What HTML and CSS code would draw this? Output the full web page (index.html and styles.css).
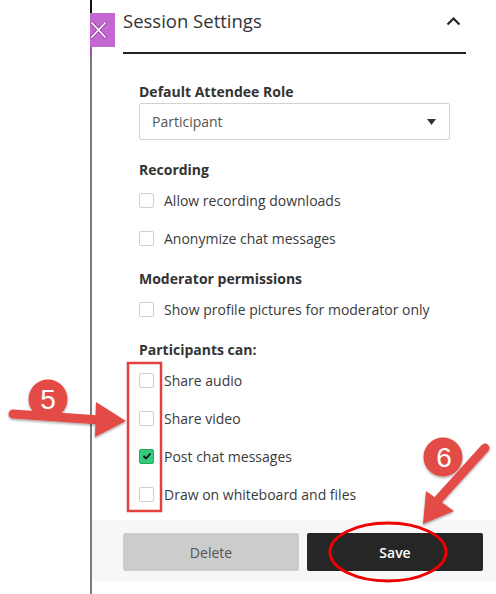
FILE: index.html
```html
<!DOCTYPE html>
<html>
<head>
    <title>Session Settings</title>
    <link rel="stylesheet" href="styles.css">
</head>
<body>
    <div class="page">
        <div class="gutter"></div>

        <div class="panel">
            <button class="close-btn" type="button" aria-label="Close">
                <svg width="25" height="34" viewBox="0 0 25 34">
                    <path d="M2 10 L15 24 M15 10 L2 24" stroke="#9b3fa8" stroke-width="3.4" stroke-linecap="round"/>
                    <path d="M2 10 L15 24 M15 10 L2 24" stroke="#fff" stroke-width="1.8" stroke-linecap="round"/>
                </svg>
            </button>

            <div class="panel-body">
                <div class="panel-header">
                    <h2>Session Settings</h2>
                    <svg class="chevron" width="15" height="10" viewBox="0 0 15 10">
                        <polyline points="1.5,8.5 7.5,2.5 13.5,8.5" fill="none" stroke="#222" stroke-width="2.2"/>
                    </svg>
                </div>

                <div class="settings">
                    <div class="section-title">Default Attendee Role</div>
                    <div class="select-box">
                        <span>Participant</span>
                        <svg width="9" height="6" viewBox="0 0 9 6"><polygon points="0,0 9,0 4.5,6" fill="#333"/></svg>
                    </div>

                    <div class="section-title section-gap">Recording</div>
                    <div class="check-row"><span class="check"></span>Allow recording downloads</div>
                    <div class="check-row"><span class="check"></span>Anonymize chat messages</div>

                    <div class="section-title section-gap-sm">Moderator permissions</div>
                    <div class="check-row"><span class="check"></span>Show profile pictures for moderator only</div>

                    <div class="section-title section-gap-sm">Participants can:</div>
                    <div class="check-row"><span class="check"></span>Share audio</div>
                    <div class="check-row"><span class="check"></span>Share video</div>
                    <div class="check-row">
                        <span class="check checked">
                            <svg width="10" height="8" viewBox="0 0 10 8"><polyline points="1.5,4 4,6.5 8.5,1.5" fill="none" stroke="#111" stroke-width="1.8"/></svg>
                        </span>Post chat messages
                    </div>
                    <div class="check-row"><span class="check"></span>Draw on whiteboard and files</div>
                </div>
            </div>

            <div class="panel-footer">
                <button type="button" class="btn btn-delete">Delete</button>
                <button type="button" class="btn btn-save">Save</button>
            </div>
        </div>
    </div>

    <svg class="annotations" width="496" height="594" viewBox="0 0 496 594">
        <defs>
            <filter id="shadow" x="-30%" y="-30%" width="160%" height="160%">
                <feDropShadow dx="0" dy="1.5" stdDeviation="1.2" flood-color="#000" flood-opacity="0.35"/>
            </filter>
        </defs>

        <rect x="128" y="363" width="33" height="148" fill="none" stroke="#e3403f" stroke-width="2.5"/>

        <g filter="url(#shadow)" fill="#e34b47">
            <line x1="13" y1="414" x2="100" y2="420" stroke="#e34b47" stroke-width="9" stroke-linecap="round"/>
            <polygon points="96,402 126,421 95,437"/>
            <circle cx="48" cy="399" r="19.5"/>
        </g>
        <text x="48" y="409" class="num">5</text>

        <g filter="url(#shadow)" fill="#e34b47">
            <line x1="485" y1="448" x2="438" y2="500" stroke="#e34b47" stroke-width="9" stroke-linecap="round"/>
            <polygon points="426,491 454,511 423,524"/>
            <circle cx="443" cy="457" r="19.5"/>
        </g>
        <text x="444" y="467" class="num">6</text>

        <ellipse cx="388" cy="552" rx="58" ry="29" fill="none" stroke="#f00000" stroke-width="3"/>
    </svg>
</body>
</html>
```

FILE: styles.css
```css
body {
    margin: 0;
    font-family: "Open Sans", "Liberation Sans", sans-serif;
    color: #333;
    background: #fff;
}

.page {
    display: flex;
    height: 594px;
    overflow: hidden;
}

.gutter {
    width: 90px;
    flex-shrink: 0;
}

.panel {
    position: relative;
    flex: 1;
    border-left: 2px solid #7a7a7a;
}

.panel::before {
    content: "";
    position: absolute;
    left: -2px;
    top: 0;
    width: 2px;
    height: 13px;
    background: #111;
}

.panel::after {
    content: "";
    position: absolute;
    left: -2px;
    top: 13px;
    width: 2px;
    height: 44px;
    background: #a052b0;
}

.close-btn {
    position: absolute;
    left: -2px;
    top: 13px;
    width: 25px;
    height: 34px;
    padding: 0;
    border: none;
    background: #c468d1;
    z-index: 2;
}

.close-btn svg {
    display: block;
}

.panel-body {
    padding: 0 30px 0 31px;
}

.panel-header {
    display: flex;
    align-items: center;
    justify-content: space-between;
    height: 41px;
    padding-bottom: 11px;
    border-bottom: 2px solid #222;
}

.panel-header h2 {
    margin: 0;
    font-size: 18.5px;
    font-weight: 400;
    color: #333;
}

.chevron {
    margin-right: 5px;
    margin-top: 1px;
}

.settings {
    padding: 27px 16px 0 16px;
}

.section-title {
    font-size: 14px;
    font-weight: 700;
    line-height: 22px;
    color: #333;
}

.section-gap {
    margin-top: 19px;
}

.section-gap-sm {
    margin-top: 11px;
}

.select-box {
    display: flex;
    align-items: center;
    justify-content: space-between;
    height: 35px;
    padding: 0 13px 0 12px;
    border: 1px solid #d2d2d2;
    border-radius: 2px;
    font-size: 14px;
    color: #555;
}

.check-row {
    display: flex;
    align-items: center;
    height: 38px;
    font-size: 14px;
    color: #3a3a3a;
}

.check {
    display: flex;
    align-items: center;
    justify-content: center;
    width: 13px;
    height: 13px;
    margin-right: 10px;
    border: 1px solid #cfcfcf;
    border-radius: 2px;
    background: #fff;
    flex-shrink: 0;
}

.check.checked {
    background: #35c97c;
    border-color: #27a863;
}

.panel-footer {
    display: flex;
    gap: 8px;
    margin-top: 7px;
    padding: 13px 13px 10px 31px;
    background: #f7f7f7;
}

.btn {
    width: 176px;
    height: 38px;
    border: none;
    border-radius: 2px;
    font-family: "Open Sans", "Liberation Sans", sans-serif;
    font-size: 14px;
}

.btn-delete {
    background: #cccccc;
    color: #555;
}

.btn-save {
    background: #262626;
    color: #fff;
    font-weight: 600;
}

.annotations {
    position: absolute;
    left: 0;
    top: 0;
    pointer-events: none;
}

.num {
    font-family: "Liberation Sans", Arial, sans-serif;
    font-size: 28px;
    fill: #fff;
    text-anchor: middle;
}
```
